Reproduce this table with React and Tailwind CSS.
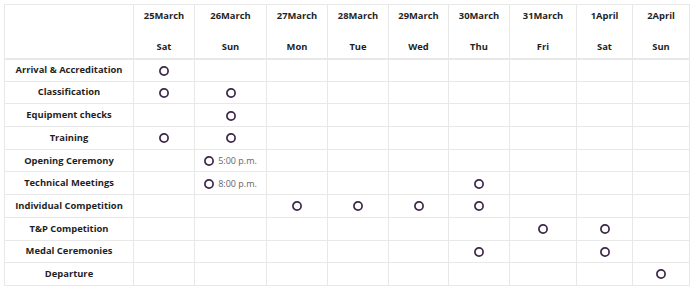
const days = [
  { date: '25March', day: 'Sat', w: 61 },
  { date: '26March', day: 'Sun', w: 72 },
  { date: '27March', day: 'Mon', w: 61 },
  { date: '28March', day: 'Tue', w: 61 },
  { date: '29March', day: 'Wed', w: 60 },
  { date: '30March', day: 'Thu', w: 61 },
  { date: '31March', day: 'Fri', w: 67 },
  { date: '1April', day: 'Sat', w: 56 },
  { date: '2April', day: 'Sun', w: 57 },
];

// cell index -> optional time label
const rows = [
  { name: 'Arrival & Accreditation', marks: { 0: '' } },
  { name: 'Classification', marks: { 0: '', 1: '' } },
  { name: 'Equipment checks', marks: { 1: '' } },
  { name: 'Training', marks: { 0: '', 1: '' } },
  { name: 'Opening Ceremony', marks: { 1: '5:00 p.m.' } },
  { name: 'Technical Meetings', marks: { 1: '8:00 p.m.', 5: '' } },
  { name: 'Individual Competition', marks: { 2: '', 3: '', 4: '', 5: '' } },
  { name: 'T&P Competition', marks: { 6: '', 7: '' } },
  { name: 'Medal Ceremonies', marks: { 5: '', 7: '' } },
  { name: 'Departure', marks: { 8: '' } },
];

function Dot() {
  return (
    <svg width="10" height="10" viewBox="0 0 10 10" className="shrink-0">
      <circle cx="5" cy="5" r="4.1" fill="none" stroke="#3d2848" strokeWidth="1.7" />
    </svg>
  );
}

export default function App() {
  return (
    <div className="w-[693px] h-[290px] bg-white p-1" style={{ fontFamily: '"Open Sans", sans-serif' }}>
      <table className="table-fixed border-collapse w-[685px] text-[9.4px] text-[#1f1f1f]">
        <colgroup>
          <col style={{ width: 129 }} />
          {days.map((d, i) => <col key={i} style={{ width: d.w }} />)}
        </colgroup>
        <thead>
          <tr className="h-[54px]">
            <th className="border border-[#e8e8e8] border-b-2" />
            {days.map((d, i) => (
              <th key={i} className="border border-[#e8e8e8] border-b-2 font-bold text-center align-middle leading-[15.5px] p-0">
                <div>{d.date}</div>
                <div>&nbsp;</div>
                <div>{d.day}</div>
              </th>
            ))}
          </tr>
        </thead>
        <tbody>
          {rows.map((r, ri) => (
            <tr key={ri} className="h-[22.7px]">
              <td className="border border-[#e8e8e8] text-center font-bold p-0">{r.name}</td>
              {days.map((d, i) => (
                <td key={i} className="border border-[#e8e8e8] text-center p-0">
                  {i in r.marks && (
                    <span className="inline-flex items-center gap-[4px] align-middle">
                      <Dot />
                      {r.marks[i] && <span className="text-[#666] text-[9px]">{r.marks[i]}</span>}
                    </span>
                  )}
                </td>
              ))}
            </tr>
          ))}
        </tbody>
      </table>
    </div>
  );
}
